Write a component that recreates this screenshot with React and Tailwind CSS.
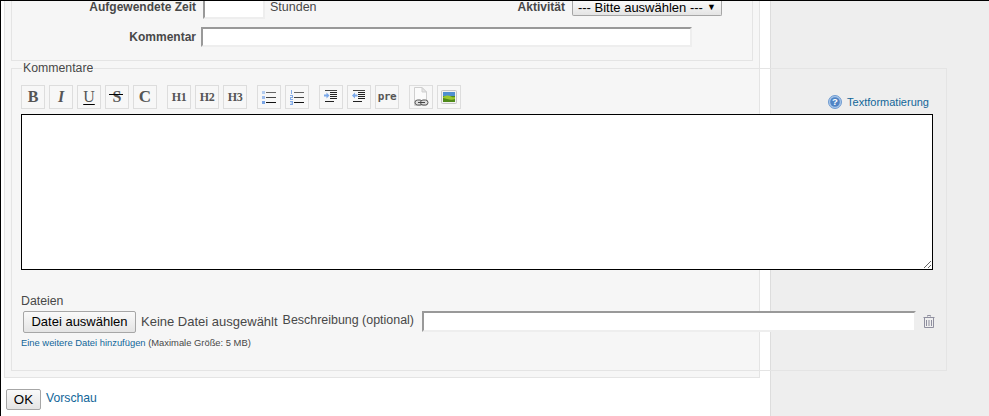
const font = { fontFamily: '"Liberation Sans", Arial, sans-serif' };

function ToolBtn({ children, className = "" }) {
  return (
    <div className={`flex h-[24px] w-[24px] items-center justify-center border border-[#dddddd] bg-[#f7f7f7] ${className}`}>
      {children}
    </div>
  );
}

function SerifGlyph({ children, className = "" }) {
  return (
    <span className={`font-['Liberation_Serif',serif] text-[#555555] ${className}`}>{children}</span>
  );
}

function ListLines() {
  return (
    <>
      <rect x="5" y="3" width="10" height="1" fill="#666" />
      <rect x="5" y="8" width="10" height="1" fill="#444" />
      <rect x="5" y="13" width="10" height="1" fill="#111" />
    </>
  );
}

function BulletList() {
  return (
    <svg width="16" height="16" viewBox="0 0 16 16">
      <rect x="1" y="2" width="3" height="3" fill="#b4cdf0" />
      <rect x="1" y="7" width="3" height="3" fill="#9dbcec" />
      <rect x="1" y="12" width="3" height="3" fill="#7aa5e6" />
      <ListLines />
    </svg>
  );
}

function NumberList() {
  return (
    <svg width="16" height="16" viewBox="0 0 16 16">
      <path d="M2 1h1v4H2zM1 6h3v3H2v1h2v1H1V8h2V7H1zM1 12h3v4H1v-1h2v-.500H1.500v-1H3V13H1z" fill="#84abe6" />
      <ListLines />
    </svg>
  );
}

function Indent({ out }) {
  return (
    <svg width="16" height="16" viewBox="0 0 16 16">
      <rect x="2" y="1" width="12" height="1" fill="#444" />
      <rect x="7" y="3" width="7" height="1" fill="#222" />
      <rect x="7" y="5" width="7" height="1" fill="#222" />
      <rect x="7" y="7" width="7" height="1" fill="#222" />
      <rect x="7" y="9" width="7" height="1" fill="#222" />
      <rect x="2" y="12" width="9" height="1" fill="#222" />
      {out ? (
        <path d="M1 6.500 4 3.500v2h2.500v2H4v2z" fill="#7aa8ea" />
      ) : (
        <path d="M6.500 6.500 3.500 3.500v2H1v2h2.500v2z" fill="#7aa8ea" />
      )}
    </svg>
  );
}

function AttachIcon() {
  return (
    <svg width="16" height="20" viewBox="0 0 16 20">
      <path d="M1.500.5h7.500l4.500 4.500v13.500h-12z" fill="#fbfbfb" stroke="#cfcfcf" />
      <path d="M9 .5v4.500h4.500z" fill="#e6e6e6" stroke="#cfcfcf" />
      <rect x="2" y="13" width="7.500" height="5" rx="2.500" fill="#dddddd" stroke="#555555" />
      <rect x="7.500" y="13" width="7.500" height="5" rx="2.500" fill="#dddddd" stroke="#555555" />
      <rect x="5" y="15" width="7" height="1" fill="#444444" />
    </svg>
  );
}

function ImageIcon() {
  return (
    <svg width="16" height="14" viewBox="0 0 16 14">
      <rect x="0.500" y="0.500" width="15" height="13" rx="1" fill="#f2f2f2" stroke="#c4c4c4" />
      <rect x="2" y="2" width="12" height="4" fill="#4f8fd0" />
      <rect x="2" y="6" width="12" height="6" fill="#4f8a1a" />
      <path d="M2 7c3-2 6-2 8-.5 1.500 1 3 1 4 .5v2c-4 1.500-8 0-12-1z" fill="#9cc92f" />
    </svg>
  );
}

function HelpIcon() {
  return (
    <svg width="14" height="14" viewBox="0 0 14 14">
      <circle cx="7" cy="7" r="6.500" fill="#a8c6ea" stroke="#6f9bd0" />
      <circle cx="7" cy="7" r="4.800" fill="#4f83c4" />
      <text x="7" y="10.300" textAnchor="middle" fontSize="9.500" fontWeight="700" fill="#ffffff" fontFamily="Liberation Sans">?</text>
    </svg>
  );
}

function TrashIcon() {
  return (
    <svg width="12" height="13" viewBox="0 0 12 13" fill="none" stroke="#8f8f9f">
      <path d="M4.500 1.500V.5h3v1" />
      <path d="M.5 2.500h11" />
      <path d="M1.500 3v9.500h9V3" />
      <path d="M3.500 5v6M6 5v6M8.500 5v6" />
    </svg>
  );
}

const inset = "border-2 border-t-[#999999] border-l-[#999999] border-r-[#eeeeee] border-b-[#eeeeee] bg-white";
const nativeBtn = "rounded-[2px] border border-[#a6a6a6] bg-gradient-to-b from-[#fafafa] to-[#e4e4e4] text-black";

export default function App() {
  return (
    <div style={font} className="flex h-[416px] w-[989px] overflow-hidden border-l border-t border-black bg-white text-[12px] text-[#484848]">
      <main className="relative z-10 flex w-[769px] shrink-0 flex-col">
        <div className="ml-[3px] h-[377px] w-[756px] shrink-0 border-x border-b border-[#e4e4e4] bg-[#f6f6f6] pl-[6px]">
          <div className="h-[60px] w-[742px] overflow-hidden border-x border-b border-[#e4e4e4]">
            <div className="flex h-[18px] items-start">
              <label className="w-[184px] text-right font-bold leading-[12px]">Aufgewendete Zeit</label>
              <div className={`ml-[7px] h-[18px] w-[62px] ${inset} border-t-0`} />
              <span className="ml-[5px] mt-[-1px] text-[12.5px] leading-[15px]">Stunden</span>
              <label className="ml-[201px] font-bold leading-[12px]">Aktivität</label>
              <div className={`relative ml-[7px] flex h-[15px] w-[150px] items-center rounded-t-none border-t-0 pl-[5px] text-[13px] leading-[14px] ${nativeBtn}`}>
                --- Bitte auswählen ---
                <span className="absolute right-[5px] top-[1px] text-[9px] leading-[11px]">▼</span>
              </div>
            </div>
            <div className="mt-[8px] flex h-[20px] items-center">
              <label className="w-[184px] text-right font-bold">Kommentar</label>
              <div className={`ml-[5px] h-[20px] w-[491px] ${inset}`} />
            </div>
          </div>

          <fieldset className="mt-[2px] h-[308px] w-[936px] border border-[#e4e4e4] px-[9px]">
            <legend className="ml-[1px] px-[1px] text-[12.3px] leading-[11px]">Kommentare</legend>
            <div className="flex items-end justify-between pr-[4px] pt-[11px]">
              <div className="flex">
                <div className="flex gap-[4px]">
                  <ToolBtn><SerifGlyph className="text-[16px] font-bold">B</SerifGlyph></ToolBtn>
                  <ToolBtn><SerifGlyph className="text-[16px] font-bold italic">I</SerifGlyph></ToolBtn>
                  <ToolBtn><SerifGlyph className="text-[16px] underline decoration-black underline-offset-2">U</SerifGlyph></ToolBtn>
                  <ToolBtn>
                    <span className="relative flex w-[16px] justify-center">
                      <SerifGlyph className="text-[16px] font-bold">S</SerifGlyph>
                      <span className="absolute left-0 top-[9px] h-[1px] w-[14px] bg-black" />
                    </span>
                  </ToolBtn>
                  <ToolBtn><SerifGlyph className="text-[17px] font-bold">C</SerifGlyph></ToolBtn>
                </div>
                <div className="ml-[10px] flex gap-[4px]">
                  <ToolBtn><SerifGlyph className="text-[12px] font-bold tracking-[-0.5px]">H1</SerifGlyph></ToolBtn>
                  <ToolBtn><SerifGlyph className="text-[12px] font-bold tracking-[-0.5px]">H2</SerifGlyph></ToolBtn>
                  <ToolBtn><SerifGlyph className="text-[12px] font-bold tracking-[-0.5px]">H3</SerifGlyph></ToolBtn>
                </div>
                <div className="ml-[10px] flex gap-[4px]">
                  <ToolBtn><BulletList /></ToolBtn>
                  <ToolBtn><NumberList /></ToolBtn>
                </div>
                <div className="ml-[10px] flex gap-[4px]">
                  <ToolBtn><Indent /></ToolBtn>
                  <ToolBtn><Indent out /></ToolBtn>
                  <ToolBtn><span className="font-['DejaVu_Sans_Mono',monospace] text-[11px] font-bold tracking-[-0.5px] text-[#555555]">pre</span></ToolBtn>
                </div>
                <div className="ml-[10px] flex gap-[4px]">
                  <ToolBtn><AttachIcon /></ToolBtn>
                  <ToolBtn><ImageIcon /></ToolBtn>
                </div>
              </div>
              <a className="mb-[-1px] mr-[4px] flex items-center gap-[5px] text-[11px] text-[#116699]">
                <HelpIcon />
                Textformatierung
              </a>
            </div>
            <textarea className="mt-[5px] block h-[156px] w-[912px] border border-black bg-white outline-none" />
            <div className="mt-[24px] text-[12.3px] leading-[14px]">Dateien</div>
            <div className="mt-[3px] flex h-[21px] items-center">
              <div className={`ml-[2px] flex h-[22px] w-[113px] items-center justify-center text-[13px] ${nativeBtn}`}>Datei auswählen</div>
              <span className="ml-[5px] text-[13px]">Keine Datei ausgewählt</span>
              <span className="mb-[3px] ml-[5px] text-[12.45px]">Beschreibung (optional)</span>
              <div className={`ml-[8px] h-[21px] w-[494px] ${inset}`} />
              <span className="ml-[7px]"><TrashIcon /></span>
            </div>
            <div className="mt-[4px] text-[9.4px]">
              <a className="text-[#116699]">Eine weitere Datei hinzufügen</a> (Maximale Größe: 5 MB)
            </div>
          </fieldset>
        </div>
        <div className="ml-[5px] mt-[11px] flex items-start">
          <div className={`flex h-[21px] w-[35px] items-center justify-center text-[13.33px] ${nativeBtn}`}>OK</div>
          <a className="ml-[5px] text-[12.2px] text-[#116699]">Vorschau</a>
        </div>
      </main>
      <aside className="flex-1 border-l border-[#dddddd] bg-[#eeeeee]" />
    </div>
  );
}
